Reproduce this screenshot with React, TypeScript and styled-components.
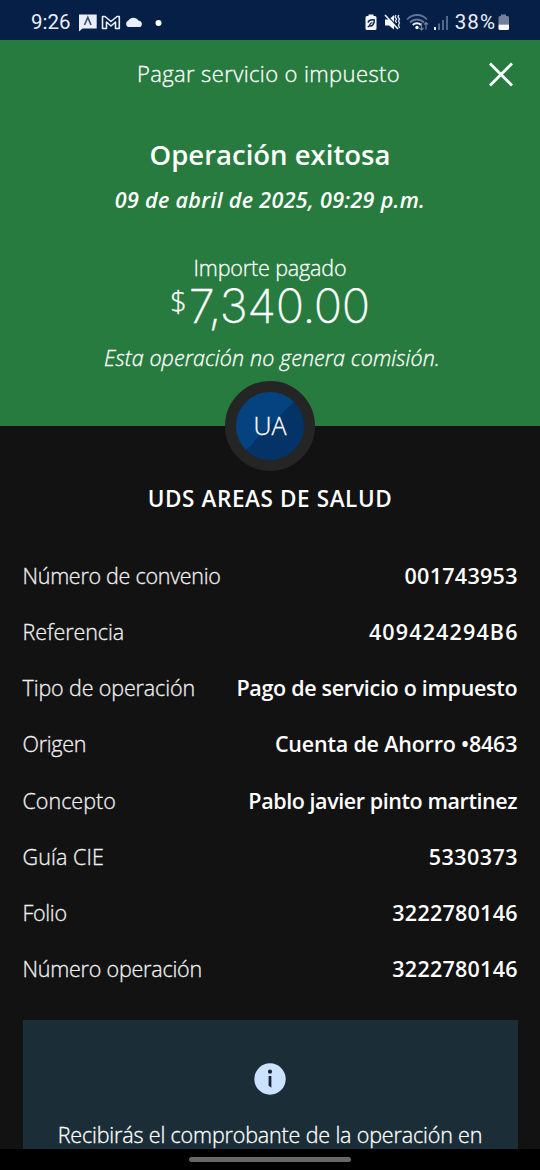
import React from 'react';
import styled, { createGlobalStyle } from 'styled-components';

const GlobalStyle = createGlobalStyle`
  * { box-sizing: border-box; }
  html, body { margin: 0; padding: 0; background: #000; }
  body { font-family: 'Open Sans', sans-serif; color: #fff; }
`;

const Screen = styled.div`
  width: 540px;
  height: 1170px;
  overflow: hidden;
  display: flex;
  flex-direction: column;
  background: #121212;
`;

const StatusBar = styled.header`
  flex: none;
  height: 40px;
  padding: 5px 30px 0 31px;
  display: flex;
  align-items: center;
  justify-content: space-between;
  background: #061f47;
  color: #e9effa;
`;

const StatusGroup = styled.div<{ $gap: number }>`
  display: flex;
  align-items: center;
  gap: ${(p) => p.$gap}px;
  height: 35px;
`;

const StatusText = styled.span<{ $spacing?: number }>`
  font-family: Roboto, sans-serif;
  font-size: 20.5px;
  line-height: 35px;
  letter-spacing: ${(p) => p.$spacing ?? 0}px;
  white-space: pre;
`;

const Icon = styled.svg`
  display: block;
  flex: none;
`;

const Hero = styled.section`
  flex: none;
  height: 386px;
  display: flex;
  flex-direction: column;
  align-items: center;
  background: #277b3e;
`;

const TitleBar = styled.div`
  width: 540px;
  height: 65px;
  display: grid;
  grid-template-columns: 54px 1fr 54px;
  align-items: center;
  justify-items: center;
  padding: 0 12px 0 9px;
`;

const CloseButton = styled.button`
  width: 30px;
  height: 30px;
  padding: 0;
  border: 0;
  background: none;
  color: #fff;
`;

const Line = styled.div<{
  $size: number;
  $height: number;
  $bold?: boolean;
  $spacing?: number;
  $italic?: boolean;
  $top?: number;
}>`
  font-size: ${(p) => p.$size}px;
  line-height: ${(p) => p.$height}px;
  font-weight: ${(p) => (p.$bold ? 600 : 300)};
  -webkit-text-stroke: ${(p) => (p.$bold ? 0 : 0.3)}px currentColor;
  font-style: ${(p) => (p.$italic ? 'italic' : 'normal')};
  letter-spacing: ${(p) => p.$spacing ?? 0}px;
  margin-top: ${(p) => p.$top ?? 0}px;
  white-space: nowrap;
`;

const Commission = styled(Line)`
  padding-left: 4px;
`;

const Amount = styled.div`
  display: flex;
  align-items: flex-start;
  height: 48px;
  font-weight: 300;
`;

const Currency = styled.span`
  font-size: 29px;
  line-height: 35px;
  margin-right: 2px;
  -webkit-text-stroke: 0.3px currentColor;
`;

const Figure = styled.span`
  font-family: Inter, sans-serif;
  font-weight: 200;
  -webkit-text-stroke: 0.3px currentColor;
  font-size: 47px;
  line-height: 46px;
  letter-spacing: -0.4px;
`;

const Avatar = styled.div`
  flex: none;
  width: 90px;
  height: 90px;
  margin: -45px auto 0;
  padding-bottom: 2px;
  border: 11px solid #252525;
  border-radius: 50%;
  background: linear-gradient(135deg, #04437f 50%, #043367 50%);
  display: flex;
  align-items: center;
  justify-content: center;
  font-size: 25px;
  font-weight: 300;
  -webkit-text-stroke: 0.3px currentColor;
  position: relative;
`;

const Payee = styled.h1`
  margin: 13px 0 0;
  font-size: 22.5px;
  line-height: 30px;
  font-weight: 600;
  letter-spacing: 0.6px;
  text-align: center;
`;

const Details = styled.dl`
  margin: 33.500px 0 0;
  padding: 0 22.5px;
`;

const Row = styled.div`
  height: 56.25px;
  display: flex;
  align-items: center;
  justify-content: space-between;
  font-size: 21.5px;
  line-height: 30px;
`;

const Label = styled.dt<{ $spacing: number }>`
  color: #f0f0f0;
  font-weight: 300;
  -webkit-text-stroke: 0.3px currentColor;
  letter-spacing: ${(p) => p.$spacing}px;
  white-space: nowrap;
`;

const Value = styled.dd<{ $spacing: number }>`
  margin: 0 ${(p) => -p.$spacing}px 0 0;
  font-weight: 600;
  letter-spacing: ${(p) => p.$spacing}px;
  white-space: nowrap;
`;

const Notice = styled.section`
  flex: 1;
  min-height: 0;
  overflow: hidden;
  margin: 22.5px 22.5px 0;
  padding-top: 43px;
  display: flex;
  flex-direction: column;
  align-items: center;
  background: #1b2e38;
`;

const NavBar = styled.footer`
  flex: none;
  height: 21px;
  padding-top: 8px;
  background: #000;
`;

const HomeHandle = styled.div`
  width: 162px;
  height: 5px;
  margin: 0 auto;
  border-radius: 3px;
  background: #686868;
`;

const rows: [string, string, number, number][] = [
  ['Número de convenio', '001743953', -0.28, 0.3],
  ['Referencia', '409424294B6', -0.05, 1.15],
  ['Tipo de operación', 'Pago de servicio o impuesto', -0.13, -0.32],
  ['Origen', 'Cuenta de Ahorro •8463', -0.3, -0.2],
  ['Concepto', 'Pablo javier pinto martinez', 0, -0.43],
  ['Guía CIE', '5330373', 0.1, 0.45],
  ['Folio', '3222780146', -0.3, 0.25],
  ['Número operación', '3222780146', -0.22, 0.25],
];

const NotificationIcons = () => (
  <Icon width="88" height="24" viewBox="0 0 88 24" fill="none">
    <path d="M1 3.500H18.700V17.500H4.500L1 20.500Z" fill="#e9effa" />
    <path d="M6.500 14L9.800 6.500L13 14" stroke="#42526f" strokeWidth="1.700" />
    <path d="M24.500 17.500V5.500H27L33 10.500L39 5.500H41.300V17.500H37.500V11L33 15L28.500 11V17.500Z" stroke="#e9effa" strokeWidth="1.600" strokeLinejoin="round" />
    <path d="M50 16A3.600 3.600 0 0 1 50.300 9.500A6 6 0 0 1 60.500 9.500A3.600 3.600 0 0 1 62.500 16Z" fill="#e9effa" />
    <circle cx="80.500" cy="12" r="3" fill="#fff" />
  </Icon>
);

const SystemIcons = () => (
  <Icon width="88" height="24" viewBox="0 0 88 24" fill="none">
    <path d="M3.500 5V3.500H8.500V5H10A1.500 1.500 0 0 1 11.500 6.500V17.500A1.500 1.500 0 0 1 10 19H2A1.500 1.500 0 0 1 .5 17.500V6.500A1.500 1.500 0 0 1 2 5Z" fill="#f3f6fc" />
    <path d="M3 11.500C4 9 6.500 8.500 9.300 9C9.500 13 7 15.800 4.500 14.800L2.800 16" stroke="#061f47" strokeWidth="1.400" />
    <path d="M4.500 14.300C5 12.500 6 11.800 7.500 11.500" stroke="#061f47" strokeWidth="1.200" />
    <path d="M20 8.500H24L29 4V18.500L24 14.500H20Z" fill="#f3f6fc" />
    <path d="M20.500 3L33 16.500" stroke="#061f47" strokeWidth="1.600" />
    <path d="M20 4L33 18" stroke="#f3f6fc" strokeWidth="1.600" />
    <path d="M31 4L30 6L31.500 8L30.500 10L31.500 12M33.800 4L33 6L34.500 8L33.500 10L34.500 12L33.500 14L34.500 17" stroke="#dfe7f4" strokeWidth="1.300" />
    <path d="M42 8.500C47.500 2.500 56.500 2.500 62 8.500M45 11.500C49 7.500 55 7.500 59 11.500" stroke="#627594" strokeWidth="1.800" />
    <path d="M47.800 14C50 11.800 54 11.800 56 14" stroke="#e9effa" strokeWidth="2" />
    <circle cx="52" cy="16.500" r="1.700" fill="#fff" />
    <path d="M56.500 12V19M54.500 17L56.500 19L58.500 17M61 18.500V11.500M59 13.500L61 11.500L63 13.500" stroke="#71829d" strokeWidth="1.200" />
    <path d="M70 16V19" stroke="#e9effa" strokeWidth="2" />
    <path d="M74 12.500V19M78 9V19M82 5V19" stroke="#52668a" strokeWidth="2" />
  </Icon>
);

const BatteryIcon = () => (
  <Icon width="12" height="24" viewBox="0 0 12 24">
    <path d="M3 5V3.500H8V5H9.500A1.500 1.500 0 0 1 11 6.500V13.500H.5V6.500A1.500 1.500 0 0 1 2 5Z" fill="#71819b" />
    <path d="M.5 13.500H11V17.500A1.500 1.500 0 0 1 9.500 19H2A1.500 1.500 0 0 1 .5 17.500Z" fill="#fff" />
  </Icon>
);

export default function App() {
  return (
    <>
      <GlobalStyle />
      <Screen>
        <StatusBar>
          <StatusGroup $gap={7.5}>
            <StatusText>9:26</StatusText>
            <NotificationIcons />
          </StatusGroup>
          <StatusGroup $gap={2}>
            <SystemIcons />
            <StatusText $spacing={1.1}>38%</StatusText>
            <BatteryIcon />
          </StatusGroup>
        </StatusBar>

        <Hero>
          <TitleBar>
            <span />
            <Line $size={22} $height={30} $spacing={0.38}>Pagar servicio o impuesto</Line>
            <CloseButton aria-label="Cerrar">
              <Icon width="30" height="30" viewBox="0 0 30 30" fill="none">
                <path d="M4 5.500L26 27.500M26 5.500L4 27.500" stroke="#fff" strokeWidth="2.800" />
              </Icon>
            </CloseButton>
          </TitleBar>
          <Line $size={27.5} $height={36} $bold $top={32}>Operación exitosa</Line>
          <Line $size={21.5} $height={30} $bold $spacing={0.33} $italic $top={12}>09 de abril de 2025, 09:29 p.m.</Line>
          <Line $size={21.5} $height={30} $spacing={-0.15} $top={38}>Importe pagado</Line>
          <Amount>
            <Currency>$</Currency>
            <Figure>7,340.00</Figure>
          </Amount>
          <Commission $size={21.5} $height={30} $italic $spacing={0.1} $top={12}>
            Esta operación no genera comisión.
          </Commission>
        </Hero>

        <Avatar>UA</Avatar>
        <Payee>UDS AREAS DE SALUD</Payee>

        <Details>
          {rows.map(([label, value, labelSpacing, valueSpacing]) => (
            <Row key={label}>
              <Label $spacing={labelSpacing}>{label}</Label>
              <Value $spacing={valueSpacing}>{value}</Value>
            </Row>
          ))}
        </Details>

        <Notice>
          <Icon width="32" height="32" viewBox="0 0 32 32">
            <circle cx="16" cy="16" r="15.700" fill="#cce3ff" />
            <circle cx="16" cy="8.700" r="2.100" fill="#172536" />
            <path d="M14.600 13H17.400V24.700L14.600 22.700Z" fill="#172536" />
          </Icon>
          <Line $size={21.5} $height={30} $spacing={-0.16} $top={25}>Recibirás el comprobante de la operación en</Line>
        </Notice>

        <NavBar>
          <HomeHandle />
        </NavBar>
      </Screen>
    </>
  );
}
